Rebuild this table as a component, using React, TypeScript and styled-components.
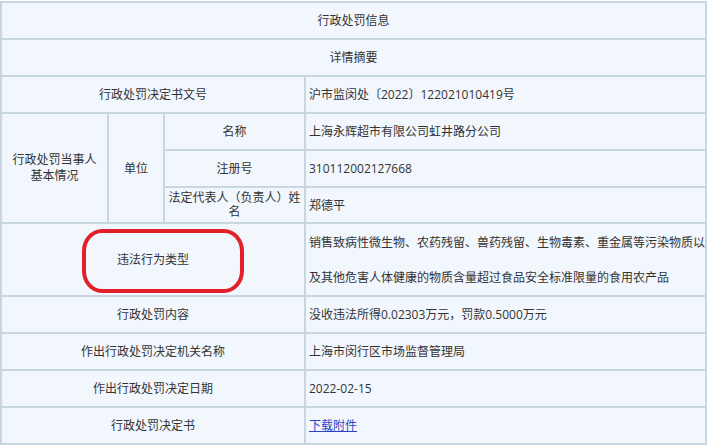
import React from "react";
import styled, { createGlobalStyle } from "styled-components";

const Global = createGlobalStyle`
  html, body { margin: 0; padding: 0; background: #ffffff; }
  body { font-family: "Open Sans", "Noto Sans CJK SC", sans-serif; }
`;

const Sheet = styled.div`
  display: grid;
  grid-template-columns: 105px 54px 139px 399px;
  grid-template-rows: repeat(5, 35px) 34px 71px repeat(4, 35px);
  gap: 2px;
  padding: 2px;
  margin-top: 1px;
  width: 707px;
  box-sizing: border-box;
  background: #c8d7df;
`;

const Cell = styled.div<{ $col: string; $row?: string; $left?: boolean; $lh?: number }>`
  grid-column: ${(p) => p.$col};
  grid-row: ${(p) => p.$row ?? "auto"};
  position: relative;
  display: flex;
  align-items: center;
  justify-content: ${(p) => (p.$left ? "flex-start" : "center")};
  text-align: ${(p) => (p.$left ? "left" : "center")};
  padding: ${(p) => (p.$left ? "0 0 0 3px" : "0 1px")};
  background: #f2f7fd;
  color: #333333;
  font-size: 12px;
  line-height: ${(p) => p.$lh ?? 15}px;
  overflow: hidden;
`;

const Ring = styled.div`
  position: absolute;
  left: 80px;
  top: 5px;
  width: 162px;
  height: 64px;
  box-sizing: border-box;
  border: 4px solid #e3202a;
  border-radius: 20px / 22px;
  pointer-events: none;
`;

const Link = styled.a`
  color: #2a45c4;
  text-decoration: underline;
  cursor: pointer;
`;

const rows: [string, React.ReactNode][] = [
  ["行政处罚内容", "没收违法所得0.02303万元，罚款0.5000万元"],
  ["作出行政处罚决定机关名称", "上海市闵行区市场监督管理局"],
  ["作出行政处罚决定日期", "2022-02-15"],
  ["行政处罚决定书", <Link key="l">下载附件</Link>],
];

export default function App() {
  return (
    <>
      <Global />
      <Sheet>
        <Cell $col="1 / 5">行政处罚信息</Cell>
        <Cell $col="1 / 5">详情摘要</Cell>

        <Cell $col="1 / 4">行政处罚决定书文号</Cell>
        <Cell $col="4" $left>沪市监闵处〔2022〕122021010419号</Cell>

        <Cell $col="1" $row="4 / 7" $lh={16}>
          行政处罚当事人
          <br />
          基本情况
        </Cell>
        <Cell $col="2" $row="4 / 7">单位</Cell>
        <Cell $col="3">名称</Cell>
        <Cell $col="4" $left>上海永辉超市有限公司虹井路分公司</Cell>
        <Cell $col="3">注册号</Cell>
        <Cell $col="4" $left>310112002127668</Cell>
        <Cell $col="3" $lh={14}>法定代表人（负责人）姓名</Cell>
        <Cell $col="4" $left>郑德平</Cell>

        <Cell $col="1 / 4">
          违法行为类型
          <Ring />
        </Cell>
        <Cell $col="4" $left $lh={35}>
          销售致病性微生物、农药残留、兽药残留、生物毒素、重金属等污染物质以及其他危害人体健康的物质含量超过食品安全标准限量的食用农产品
        </Cell>

        {rows.map(([label, value]) => (
          <React.Fragment key={label}>
            <Cell $col="1 / 4">{label}</Cell>
            <Cell $col="4" $left>{value}</Cell>
          </React.Fragment>
        ))}
      </Sheet>
    </>
  );
}
